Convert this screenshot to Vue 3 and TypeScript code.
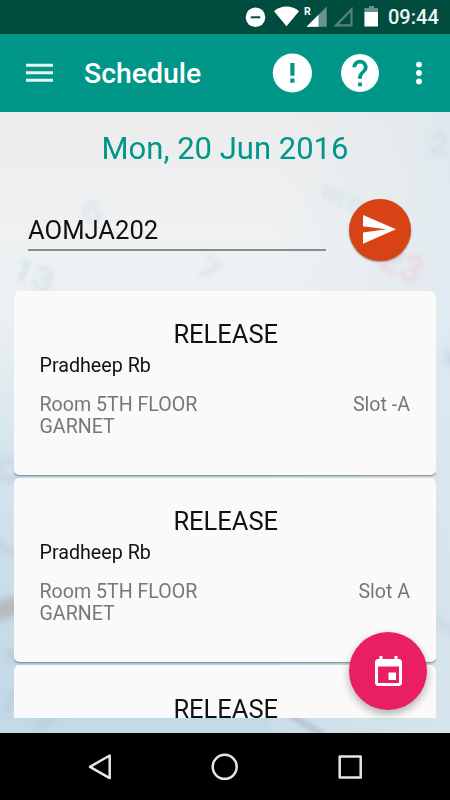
<script setup lang="ts">
import { ref } from 'vue'

interface Booking {
  id: number
  title: string
  name?: string
  room?: string
  slot?: string
}

const employeeCode = ref('AOMJA202')

const bookings: Booking[] = [
  { id: 1, title: 'RELEASE', name: 'Pradheep Rb', room: 'Room 5TH FLOOR GARNET', slot: 'Slot -A' },
  { id: 2, title: 'RELEASE', name: 'Pradheep Rb', room: 'Room 5TH FLOOR GARNET', slot: 'Slot A' },
  { id: 3, title: 'RELEASE' },
]
</script>

<template>
  <div class="phone">
    <header class="status">
      <svg class="status-icons" width="150" height="34" viewBox="0 0 150 34" aria-hidden="true">
        <circle cx="15.500" cy="17.300" r="9.800" fill="#fff" />
        <path d="M10.800 17.300h9.400" stroke="#004d40" stroke-width="2" />
        <path d="M34 11.200C40.800 5 52.200 5 59 11.200L46.500 26.300z" fill="#fff" />
        <path d="M86.700 6.500V26.700H66.500z" fill="#fff" opacity=".4" />
        <path d="M78.500 14.700V26.700H66.500z" fill="#fff" />
        <text x="64" y="15.300" class="roaming">R</text>
        <path d="M111.500 9.500V25.400H96z" fill="none" stroke="#fff" stroke-width="2.200" opacity=".32" />
        <path d="M129 6h5v2h4v4h-13.600V8H129z" fill="#fff" opacity=".4" />
        <path d="M124.400 12H138v14.500h-13.600z" fill="#fff" />
      </svg>
      <span class="clock">09:44</span>
    </header>

    <nav class="toolbar">
      <svg class="menu" width="27" height="20" viewBox="0 0 27 20" aria-hidden="true">
        <path d="M0 2.200h27M0 9.700h27M0 17.200h27" stroke="#e6f5f3" stroke-width="2.900" />
      </svg>
      <h1 class="title">Schedule</h1>
      <svg class="alert" width="40" height="40" viewBox="0 0 40 40" aria-hidden="true">
        <circle cx="20.400" cy="20" r="19.600" fill="#fff" />
        <path d="M18.300 10h4.200v12.700h-4.200zM18.300 25.600h4.200v4.200h-4.200z" fill="#009688" />
      </svg>
      <svg class="help" width="38" height="38" viewBox="2 2 20 20" aria-hidden="true">
        <path fill="#fff" d="M12 2C6.480 2 2 6.480 2 12s4.480 10 10 10 10-4.480 10-10S17.520 2 12 2zm1 17h-2v-2h2v2zm2.070-7.750l-.9.920C13.450 12.900 13 13.500 13 15h-2v-.5c0-1.100.45-2.100 1.170-2.830l1.240-1.260c.37-.36.59-.86.59-1.410 0-1.100-.9-2-2-2s-2 .9-2 2H8c0-2.210 1.790-4 4-4s4 1.790 4 4c0 .88-.36 1.680-.93 2.250z" />
      </svg>
      <svg class="more" width="8" height="26" viewBox="0 0 8 26" aria-hidden="true">
        <g fill="#fff"><circle cx="4" cy="4.600" r="2.900" /><circle cx="4" cy="13" r="2.900" /><circle cx="4" cy="21.400" r="2.900" /></g>
      </svg>
    </nav>

    <main class="content">
      <svg class="backdrop" width="450" height="621" viewBox="0 0 450 621" aria-hidden="true">
        <defs>
          <linearGradient id="sky" x1="0" y1="0" x2="0" y2="1">
            <stop offset="0" stop-color="#ececed" />
            <stop offset=".2" stop-color="#eff1f2" />
            <stop offset=".33" stop-color="#eaf0f3" />
            <stop offset=".55" stop-color="#d5e5ed" />
            <stop offset=".8" stop-color="#c8dce8" />
            <stop offset="1" stop-color="#c3d9e6" />
          </linearGradient>
          <linearGradient id="side" x1="0" y1="0" x2="1" y2="0">
            <stop offset=".6" stop-color="#e2eaee" stop-opacity="0" />
            <stop offset="1" stop-color="#dce7ee" stop-opacity=".75" />
          </linearGradient>
          <filter id="soft" x="-50%" y="-50%" width="200%" height="200%"><feGaussianBlur stdDeviation="2.200" /></filter>
          <filter id="softer" x="-50%" y="-50%" width="200%" height="200%"><feGaussianBlur stdDeviation="3.500" /></filter>
        </defs>
        <rect width="450" height="621" fill="url(#sky)" />
        <rect width="450" height="621" fill="url(#side)" />
        <g class="digits" filter="url(#soft)" fill="#c9dde8">
          <text transform="translate(79 106) rotate(14) scale(1.350 1)" font-size="29" opacity=".5">6</text>
          <text transform="translate(9 164) rotate(24) scale(1.200 1)" font-size="32" opacity=".7">13</text>
          <text transform="translate(194 160) rotate(34) scale(1.200 1)" font-size="32" opacity=".6">7</text>
          <text transform="translate(428 41) rotate(6) scale(1.100 1)" font-size="32" opacity=".8">2</text>
          <text transform="translate(318 85) rotate(24)" font-size="21" opacity=".6">WED</text>
          <text transform="translate(377 155) rotate(25)" font-size="38" fill="#f0c6d2" opacity=".6">23</text>
        </g>
        <g filter="url(#softer)" fill="none">
          <path d="M-10 502L20 492" stroke="#b3b4b8" stroke-width="19" opacity=".85" />
          <path d="M-8 430L20 444" stroke="#b5bfcb" stroke-width="6" opacity=".5" />
          <circle cx="8" cy="358" r="10" stroke="#bac9d8" stroke-width="5" opacity=".6" />
          <circle cx="12" cy="543" r="6" fill="#a9bccb" opacity=".5" />
          <path d="M6 600L14 578M38 616L60 600" stroke="#aabfd0" stroke-width="6" opacity=".4" />
          <circle cx="452" cy="246" r="8" fill="#b9ccdc" opacity=".5" />
          <path d="M432 504L456 522" stroke="#b2c5d3" stroke-width="7" opacity=".4" />
        </g>
        <rect x="270" y="590" width="180" height="31" fill="#d6e4ed" opacity=".55" filter="url(#softer)" />
        <path d="M288 602L322 622" stroke="#aab2c0" stroke-width="7" opacity=".6" filter="url(#soft)" />
      </svg>

      <h2 class="date">Mon, 20 Jun 2016</h2>

      <form class="search" @submit.prevent>
        <input v-model="employeeCode" class="code" type="text" aria-label="Employee code" />
        <button class="send" type="submit" aria-label="Send">
          <svg width="34" height="30" viewBox="0 0 34 30" aria-hidden="true">
            <path d="M0 0L33 14.300L0 28.700V17.600L23 14.300L0 11.300z" fill="#fff" />
          </svg>
        </button>
      </form>

      <section class="list">
        <article v-for="booking in bookings" :key="booking.id" class="card">
          <h3 class="card-title">{{ booking.title }}</h3>
          <p v-if="booking.name" class="name">{{ booking.name }}</p>
          <div v-if="booking.room" class="details">
            <span class="room">{{ booking.room }}</span>
            <span class="slot">{{ booking.slot }}</span>
          </div>
        </article>
      </section>

      <button class="fab" type="button" aria-label="Pick a date">
        <svg width="27" height="30" viewBox="3 1 18 20" aria-hidden="true">
          <path fill="#fff" d="M17 12h-5v5h5v-5zM16 1v2H8V1H6v2H5c-1.110 0-1.990.9-1.990 2L3 19c0 1.100.89 2 2 2h14c1.100 0 2-.9 2-2V5c0-1.100-.9-2-2-2h-1V1h-2zm3 18H5V8h14v11z" />
        </svg>
      </button>
    </main>

    <footer class="navbar">
      <svg width="450" height="67" viewBox="0 0 450 67" fill="none" stroke="#e6e6e6" stroke-width="2.500" stroke-linejoin="round" aria-hidden="true">
        <path d="M90 33.800L109.700 22.500V45.100z" />
        <circle cx="224.700" cy="33.800" r="12" />
        <rect x="339.700" y="23.500" width="21" height="21" />
      </svg>
    </footer>
  </div>
</template>

<style>
body {
  margin: 0;
  overflow: hidden;
}
</style>

<style scoped>
.phone {
  width: 450px;
  height: 800px;
  display: flex;
  flex-direction: column;
  overflow: hidden;
  font-family: Roboto, "Liberation Sans", sans-serif;
  background: #000;
}
.phone * {
  box-sizing: border-box;
}
h1, h2, h3, p {
  margin: 0;
  font-weight: 400;
}
svg {
  display: block;
  flex: none;
}
.status {
  height: 34px;
  display: flex;
  justify-content: flex-end;
  padding-right: 12px;
  background: #004d40;
  flex: none;
}
.status-icons {
  margin-right: -2px;
}
.roaming {
  font-size: 10.500px;
  font-weight: 700;
  fill: #fff;
}
.clock {
  width: 50px;
  font-size: 20px;
  line-height: 35px;
  font-weight: 500;
  color: #f2f6f5;
  white-space: nowrap;
}
.toolbar {
  height: 78px;
  flex: none;
  display: flex;
  align-items: center;
  padding: 0 27px 0 26px;
  background: #009688;
}
.title {
  margin-left: 31px;
  padding-top: 2px;
  flex: 1;
  font-size: 28.400px;
  line-height: 34px;
  font-weight: 500;
  color: #fff;
}
.help {
  margin-left: 29px;
}
.more {
  margin-left: 36px;
}
.content {
  height: 621px;
  flex: none;
  position: relative;
  padding: 0 14px;
}
.backdrop {
  position: absolute;
  inset: 0;
}
.digits {
  font-weight: 500;
}
.date {
  position: relative;
  padding-top: 19px;
  font-size: 31px;
  line-height: 36px;
  text-align: center;
  color: #009688;
}
.search {
  position: relative;
  display: flex;
  align-items: flex-start;
  height: 94.500px;
  margin-top: 29px;
  padding: 0 25px 0 14px;
}
.code {
  width: 298px;
  height: 55px;
  margin-right: 23px;
  padding: 15px 0 0;
  border: 0;
  border-bottom: 2px solid #8c8c8d;
  border-radius: 0;
  outline: 0;
  background: transparent;
  font: 400 25.600px/30px Roboto, "Liberation Sans", sans-serif;
  color: #111;
}
.send {
  width: 62px;
  height: 62px;
  margin-top: 3px;
  padding: 0 0 0 14px;
  flex: none;
  border: 0;
  border-radius: 50%;
  background: #d84315;
  box-shadow: 0 1px 2px rgba(0, 0, 0, .4);
}
.list {
  position: relative;
  height: 427.500px;
  overflow: hidden;
}
.card {
  height: 184.400px;
  margin-bottom: 2.900px;
  padding: 28.500px 26px 0 25.500px;
  border-radius: 5px;
  background: #fafafa;
  box-shadow: 0 1px 2px rgba(0, 0, 0, .45);
}
.card-title {
  padding-left: 2px;
  font-size: 25.500px;
  line-height: 30px;
  text-align: center;
  color: #111;
}
.name {
  margin-top: 5px;
  font-size: 19.700px;
  line-height: 24px;
  color: #111;
}
.details {
  display: flex;
  justify-content: space-between;
  margin-top: 15.500px;
  font-size: 19.600px;
  line-height: 22.500px;
  color: #777;
}
.room {
  width: 170px;
}
.fab {
  position: absolute;
  left: 349px;
  top: 520px;
  width: 78px;
  height: 78px;
  padding: 0;
  display: flex;
  align-items: center;
  justify-content: center;
  border: 0;
  border-radius: 50%;
  background: #e91e63;
  box-shadow: 0 4px 8px rgba(0, 0, 0, .3);
}
.navbar {
  height: 67px;
  flex: none;
  background: #000;
}
</style>
